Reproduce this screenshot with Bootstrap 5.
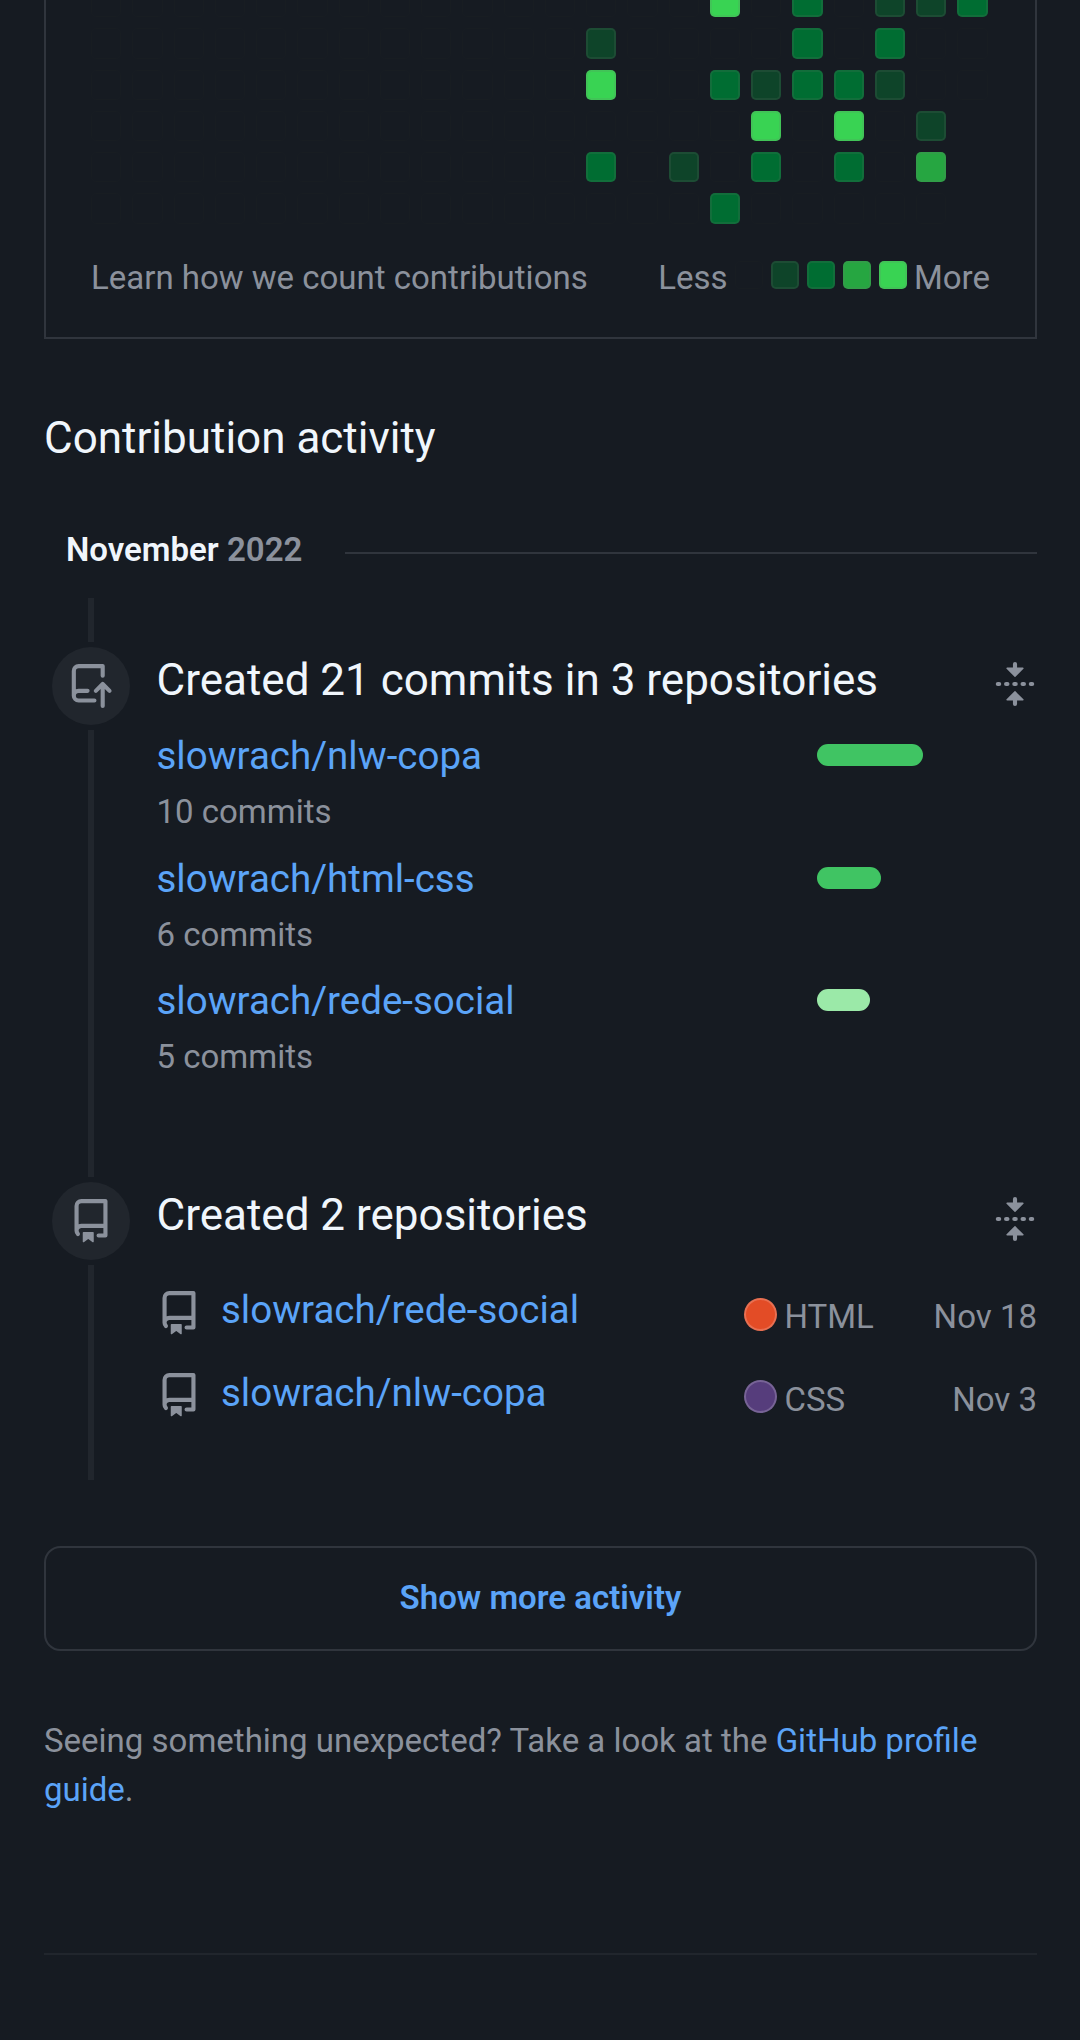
<!DOCTYPE html>
<html lang="en" data-bs-theme="dark">
<head>
<meta charset="utf-8">
<meta name="viewport" content="width=device-width, initial-scale=1">
<title>Contribution activity</title>
<link href="https://cdn.jsdelivr.net/npm/bootstrap@5.3.0/dist/css/bootstrap.min.css" rel="stylesheet">
<style>
  :root { --canvas:#161b22; --line:#30353d; --rail:#21262d; --muted:#8b919c; --fg:#f0f6fc; --accent:#5ba4f8; }
  body { background:var(--canvas); color:var(--muted); font-family:Roboto,"Liberation Sans",sans-serif; font-size:33px; line-height:50px; min-height:2040px; }
  a { color:var(--accent); text-decoration:none; }
  .page { padding:0 43px 0 44px; }
  .calendar { height:339px; border:2px solid var(--line); border-top:0; padding:0 45px 0 45px; }
  .days { display:grid; grid-template-rows:repeat(6,30.25px); grid-auto-flow:column; grid-auto-columns:30.25px; gap:11px; margin:-13px 0 0 0; }
  .day { border-radius:5px; border:2px solid rgba(115,118,115,.16); }
  .day.l0 { border:1px solid #181d22; }
  .legend-row { margin-top:29.5px; }
  .swatches { gap:8px; margin:-6px 6.5px 0 8px; }
  .swatches .day { width:28px; height:28px; }
  .l1 { background:#0e4429; } .l2 { background:#006d32; } .l3 { background:#26a641; } .l4 { background:#39d353; }
  .section-title, .event-title { font-size:44px; line-height:66px; font-weight:400; color:var(--fg); margin:0; }
  .section-title { margin-top:65.5px; }
  .month { margin-top:54px; padding-left:22px; font-size:33px; line-height:50px; font-weight:600; color:var(--muted); }
  .month strong { font-weight:600; color:var(--fg); }
  .month-rule { height:2px; background:var(--line); margin:6px 0 0 43px; }
  .timeline { margin-top:23.5px; padding-left:8px; }
  .rail { width:78px; margin-right:26.5px; }
  .rail-bar { width:6px; background:var(--rail); }
  .rail-start { height:44px; }
  .node { width:78px; height:78px; margin:5px 0; background:var(--rail); }
  .first { height:579px; } .second { height:303px; }
  .first .event { padding-top:49px; } .second .event { padding-top:5px; }
  svg { width:44px; height:44px; fill:currentColor; flex:none; display:block; }
  .fold { margin-top:15px; }
  .name { font-size:38.5px; line-height:58px; }
  .commits { margin-top:13.5px; }
  .commit-row { height:123px; }
  .commit-row + .commit-row + .commit-row { margin-top:-1px; }
  .count { margin-top:2px; }
  .track { width:220px; margin-top:17.2px; }
  .amount { height:22px; border-radius:11px; background:#40c463; }
  .amount.pale { background:#9be9a8; }
  .repos { margin-top:32.5px; }
  .repo-row { height:83px; }
  .repo-row svg { margin:10px 20.5px 0 0; }
  .lang { width:180px; margin-top:11px; }
  .dot { width:33px; height:33px; margin:6.5px 7.5px 0 0; border:2px solid rgba(255,255,255,.2); }
  .repo-row + .repo-row svg { margin-top:9px; }
  .repo-row + .repo-row .dot { margin-top:5.5px; }
  .html { background:#e34c26; } .css { background:#563d7c; }
  .when { width:113px; margin-top:11px; white-space:nowrap; }
  .more { margin-top:66px; height:105px; border:2px solid var(--line); border-radius:16.5px; color:var(--accent); font-size:33px; font-weight:600; line-height:50px; padding:0 0 2px; }
  .hint { margin:65px 0 0; line-height:49px; }
  .foot { height:2px; margin-top:138.5px; background:var(--rail); }
</style>
<script src="https://cdn.jsdelivr.net/npm/bootstrap@5.3.0/dist/js/bootstrap.bundle.min.js"></script>
</head>
<body>
<svg class="d-none">
  <symbol id="repo" viewBox="0 0 16 16"><path fill-rule="evenodd" d="M2 2.5A2.5 2.5 0 014.5 0h8.75a.75.75 0 01.75.75v12.5a.75.75 0 01-.75.75h-2.5a.75.75 0 110-1.5h1.75v-2h-8a1 1 0 00-.714 1.7.75.75 0 01-1.072 1.05A2.495 2.495 0 012 11.5v-9zm10.5-1V9h-8c-.356 0-.694.074-1 .208V2.5a1 1 0 011-1h8zM5 12.25v3.25a.25.25 0 00.4.2l1.45-1.087a.25.25 0 01.3 0L8.6 15.7a.25.25 0 00.4-.2v-3.25a.25.25 0 00-.25-.25h-3.5a.25.25 0 00-.25.25z"/></symbol>
  <symbol id="push" viewBox="0 0 16 16"><path fill-rule="evenodd" d="M1 2.5A2.5 2.5 0 013.5 0h8.75a.75.75 0 01.75.75v3.5a.75.75 0 01-1.5 0V1.5h-8a1 1 0 00-1 1v6.708A2.492 2.492 0 013.5 9h3.25a.75.75 0 010 1.5H3.5a1 1 0 100 2h5.75a.75.75 0 010 1.5H3.5A2.5 2.5 0 011 11.5v-9zm13.23 7.79a.75.75 0 001.06-1.06l-2.505-2.505a.75.75 0 00-1.06 0L9.22 9.229a.75.75 0 001.06 1.061l1.225-1.224v6.184a.75.75 0 001.5 0V9.066l1.224 1.224z"/></symbol>
  <symbol id="fold" viewBox="0 0 16 16"><path fill-rule="evenodd" d="M10.896 2H8.75V.75a.75.75 0 00-1.5 0V2H5.104a.25.25 0 00-.177.427l2.896 2.896a.25.25 0 00.354 0l2.896-2.896A.25.25 0 0010.896 2zM8.75 15.25a.75.75 0 01-1.5 0V14H5.104a.25.25 0 01-.177-.427l2.896-2.896a.25.25 0 01.354 0l2.896 2.896a.25.25 0 01-.177.427H8.75v1.25zm-6.5-6.5a.75.75 0 000-1.5h-.5a.75.75 0 000 1.5h.5zM6 8a.75.75 0 01-.75.75h-.5a.75.75 0 010-1.5h.5A.75.75 0 016 8zm2.25.75a.75.75 0 000-1.5h-.5a.75.75 0 000 1.5h.5zM12 8a.75.75 0 01-.75.75h-.5a.75.75 0 010-1.5h.5A.75.75 0 0112 8zm2.25.75a.75.75 0 000-1.5h-.5a.75.75 0 000 1.5h.5z"/></symbol>
</svg>
<main class="page">
  <section class="calendar overflow-hidden">
    <div class="days" id="days"></div>
    <div class="legend-row d-flex justify-content-between align-items-center">
      <span>Learn how we count contributions</span>
      <div class="d-flex align-items-center">
        <span>Less</span>
        <div class="swatches d-flex"><i class="day l0"></i><i class="day l1"></i><i class="day l2"></i><i class="day l3"></i><i class="day l4"></i></div>
        <span>More</span>
      </div>
    </div>
  </section>

  <h2 class="section-title">Contribution activity</h2>
  <h3 class="month d-flex align-items-center mb-0"><span><strong>November</strong> 2022</span><span class="month-rule flex-grow-1"></span></h3>

  <section class="timeline">
    <article class="first d-flex">
      <div class="rail d-flex flex-column align-items-center flex-shrink-0">
        <div class="rail-bar rail-start"></div>
        <div class="node rounded-circle d-flex align-items-center justify-content-center flex-shrink-0"><svg><use href="#push"/></svg></div>
        <div class="rail-bar flex-grow-1"></div>
      </div>
      <div class="event flex-grow-1">
        <div class="d-flex justify-content-between"><h4 class="event-title">Created 21 commits in 3 repositories</h4><svg class="fold"><use href="#fold"/></svg></div>
        <div class="commits">
          <div class="commit-row d-flex justify-content-between"><div><a class="name d-block" href="#">slowrach/nlw-copa</a><div class="count">10 commits</div></div><div class="track"><div class="amount" style="width:106px"></div></div></div>
          <div class="commit-row d-flex justify-content-between"><div><a class="name d-block" href="#">slowrach/html-css</a><div class="count">6 commits</div></div><div class="track"><div class="amount" style="width:64px"></div></div></div>
          <div class="commit-row d-flex justify-content-between"><div><a class="name d-block" href="#">slowrach/rede-social</a><div class="count">5 commits</div></div><div class="track"><div class="amount pale" style="width:53px"></div></div></div>
        </div>
      </div>
    </article>
    <article class="second d-flex">
      <div class="rail d-flex flex-column align-items-center flex-shrink-0">
        <div class="node rounded-circle d-flex align-items-center justify-content-center flex-shrink-0"><svg><use href="#repo"/></svg></div>
        <div class="rail-bar flex-grow-1"></div>
      </div>
      <div class="event flex-grow-1">
        <div class="d-flex justify-content-between"><h4 class="event-title">Created 2 repositories</h4><svg class="fold"><use href="#fold"/></svg></div>
        <div class="repos">
          <div class="repo-row d-flex"><svg><use href="#repo"/></svg><a class="name flex-grow-1" href="#">slowrach/rede-social</a><div class="lang d-flex"><i class="dot html rounded-circle"></i>HTML</div><time class="when text-end">Nov 18</time></div>
          <div class="repo-row d-flex"><svg><use href="#repo"/></svg><a class="name flex-grow-1" href="#">slowrach/nlw-copa</a><div class="lang d-flex"><i class="dot css rounded-circle"></i>CSS</div><time class="when text-end">Nov 3</time></div>
        </div>
      </div>
    </article>
  </section>

  <button type="button" class="more btn w-100 d-block">Show more activity</button>
  <p class="hint">Seeing something unexpected? Take a look at the <a href="#">GitHub profile guide</a>.</p>
  <div class="foot"></div>
</main>
<script>
  // One string per week, top to bottom; the last week is only partly over
  const weeks = Array(12).fill("000000").concat(["014020", "000000", "000010", "402002", "001420", "222000", "002420", "121000", "100130", "200"]);
  document.getElementById("days").innerHTML = weeks.map(w =>
    [...w].map(l => `<i class="day l${l}"></i>`).join("")).join("");
</script>
</body>
</html>
